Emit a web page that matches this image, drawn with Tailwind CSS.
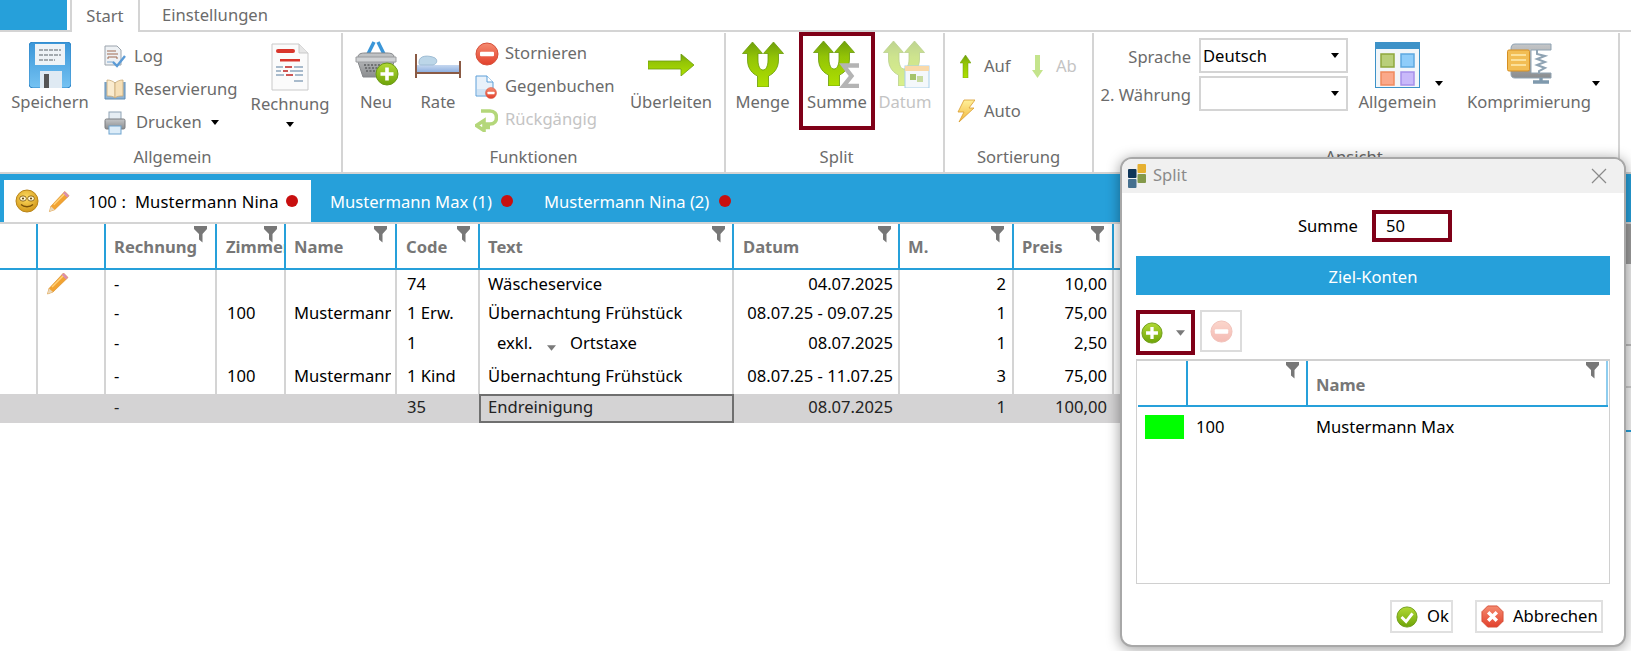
<!DOCTYPE html>
<html lang="de">
<head>
<meta charset="utf-8">
<title>Split</title>
<script src="https://cdn.jsdelivr.net/npm/@tailwindcss/browser@4"></script>
</head>
<body class="[font-family:'Noto_Sans',sans-serif] text-[16.6px] bg-white overflow-hidden">
<svg width="0" height="0" class="absolute">
  <defs>
    <linearGradient id="gFork" x1="0" y1="0" x2="0" y2="1"><stop offset="0" stop-color="#6f9f0c"/><stop offset=".35" stop-color="#93c406"/><stop offset="1" stop-color="#aee000"/></linearGradient>
    <linearGradient id="gBlue" x1="0" y1="0" x2="0" y2="1"><stop offset="0" stop-color="#3b96d8"/><stop offset="1" stop-color="#74c2f2"/></linearGradient>
    <linearGradient id="gRed" x1="0" y1="0" x2="0" y2="1"><stop offset="0" stop-color="#f58b70"/><stop offset="1" stop-color="#e2402c"/></linearGradient>
    <linearGradient id="gGreen" x1="0" y1="0" x2="0" y2="1"><stop offset="0" stop-color="#b2d935"/><stop offset="1" stop-color="#6ea408"/></linearGradient>
    <linearGradient id="gGray" x1="0" y1="0" x2="0" y2="1"><stop offset="0" stop-color="#c4c6c8"/><stop offset="1" stop-color="#8b8d8f"/></linearGradient>
    <linearGradient id="gBed" x1="0" y1="0" x2="0" y2="1"><stop offset="0" stop-color="#c6d8f0"/><stop offset="1" stop-color="#8fb0e0"/></linearGradient>
    <linearGradient id="gYellow" x1="0" y1="0" x2="0" y2="1"><stop offset="0" stop-color="#fff09a"/><stop offset="1" stop-color="#f2b63a"/></linearGradient>
    <radialGradient id="gFace" cx=".45" cy=".35" r=".7"><stop offset="0" stop-color="#ffdc60"/><stop offset="1" stop-color="#cf9314"/></radialGradient>
    <symbol id="funnel" viewBox="0 0 13 17"><path d="M0 0H13V3L8.5 8V16.5L5 13.5V8L0 3Z" fill="#777"/></symbol>
    <symbol id="fork" viewBox="0 0 42 45"><path d="M10.5 0L20.5 11.5H16V18C16 24 18 28 21 28C24 28 26 24 26 18V11.5H21.5L31.5 0L41.5 11.5H36.5V18C36.5 27 31 32 26.5 34V45H15.5V34C11 32 5.5 27 5.5 18V11.5H.5Z" fill="url(#gFork)" stroke="#689a08" stroke-width=".8"/></symbol>
    <symbol id="plus" viewBox="0 0 24 24"><circle cx="12" cy="12" r="11" fill="url(#gGreen)" stroke="#6b9a14"/><path d="M12 5.5V18.5M5.5 12H18.5" stroke="#fff" stroke-width="3.6"/></symbol>
    <symbol id="minus" viewBox="0 0 24 24"><circle cx="12" cy="12" r="11" fill="url(#gRed)" stroke="#d6503a"/><rect x="5" y="9.7" width="14" height="4.6" rx="1" fill="#fff"/></symbol>
    <symbol id="pencil" viewBox="0 0 24 24"><path d="M17.5 2L22 6.5 7 21 1.5 23 3 17.5Z" fill="#f2a332" stroke="#d68a20" stroke-width=".6"/><path d="M3 17.5L7 21 1.5 23Z" fill="#e9d6b8"/><path d="M15.5 4L17.5 2 22 6.5 20 8.5Z" fill="#d98fb0"/><path d="M6 16L17 5" stroke="#ffd27a" stroke-width="1.5"/></symbol>
    <symbol id="caret" viewBox="0 0 10 6"><path d="M0 0H10L5 6Z" fill="#000"/></symbol>
    <symbol id="caretg" viewBox="0 0 10 6"><path d="M0 0H10L5 6Z" fill="#7a7a7a"/></symbol>
  </defs>
</svg>

<div class="relative w-[1631px] h-[651px] overflow-hidden">
  <!-- top tabs -->
  <div class="flex h-[32px] text-[#6b6b6b]">
    <div class="w-[67px] bg-[#26a0da] border-b-2 border-[#d4d4d4]"></div>
    <div class="w-[3px] border-b-2 border-[#d4d4d4]"></div>
    <div class="w-[70px] border-x-2 border-[#d4d4d4] flex items-center justify-center">Start</div>
    <div class="flex-1 border-b-2 border-[#d4d4d4] pl-[22px] flex items-center">Einstellungen</div>
  </div>

  <!-- ribbon -->
  <div class="flex h-[142px] border-b-2 border-[#d4d4d4] text-[#6b6b6b]">
    <!-- Allgemein -->
    <div class="w-[343px] border-r-2 border-[#d4d4d4] mt-[1px] flex flex-col">
      <div class="flex-1 flex">
        <div class="w-[100px] flex flex-col items-center pt-[3px]">
          <div class="h-[53px] flex items-center justify-center pt-[4px]">
            <svg width="42" height="46" viewBox="0 0 42 46"><rect width="42" height="46" rx="4" fill="url(#gBlue)" stroke="#2f86c8"/><rect x="6" y="2" width="30" height="21" fill="#eef3f7"/><path d="M10 8H32M10 13H32M10 18H26" stroke="#8a9298" stroke-width="1.6" stroke-dasharray="4 1"/><rect x="11" y="29" width="22" height="17" fill="#dfeaf3"/><rect x="15" y="32" width="5" height="14" fill="#555"/></svg>
          </div>
          <div class="h-[24px] leading-[26px]">Speichern</div>
        </div>
        <div class="w-[146px] ml-[4px] pt-[7px]">
          <div class="h-[33px] flex items-center gap-[8px]">
            <svg width="22" height="23" viewBox="0 0 22 23"><path d="M1 1H13L17 5V20H1Z" fill="#eef1f4" stroke="#9aa3ac"/><path d="M3 6H12M3 9H14M4 14V12H13V14" stroke="#a06a50" fill="none"/><path d="M3 17H10" stroke="#7da7cf"/><path d="M9 17L13 21 21 11" stroke="#5b9bd6" stroke-width="2.4" fill="none"/></svg>
            <span>Log</span>
          </div>
          <div class="h-[33px] flex items-center gap-[8px]">
            <svg width="22" height="23" viewBox="0 0 22 23"><path d="M1 4V21H21V4" fill="#8fb3d3" stroke="#5f8db5"/><path d="M3 2C6 2 9 3 11 5V20C9 18 6 18 3 18Z" fill="#faecd0" stroke="#c9a976" stroke-width=".8"/><path d="M19 2C16 2 13 3 11 5V20C13 18 16 18 19 18Z" fill="#f6e0b8" stroke="#c9a976" stroke-width=".8"/></svg>
            <span>Reservierung</span>
          </div>
          <div class="h-[33px] flex items-center">
            <svg width="22" height="24" viewBox="0 0 22 24"><rect x="5" y="1" width="12" height="8" fill="#e6edf3" stroke="#8fa3b5"/><rect x="1" y="8" width="20" height="10" rx="1.5" fill="url(#gGray)" stroke="#7b7d80"/><rect x="5" y="15" width="12" height="8" fill="#dcecf8" stroke="#6ea4cf"/></svg>
            <span class="ml-[10px] w-[71px]">Drucken</span>
            <svg width="8" height="5" class="ml-[4px]"><use href="#caret"/></svg>
          </div>
        </div>
        <div class="w-[80px] flex flex-col items-center pt-[7px]">
          <div class="h-[54px] flex items-center justify-center">
            <svg width="40" height="48" viewBox="0 0 40 48"><path d="M2 1H29L38 10V47H2Z" fill="#fbfbfb" stroke="#c9c9c9"/><path d="M29 1V10H38" fill="#e6e6e6" stroke="#c9c9c9"/><rect x="6" y="6" width="19" height="4" rx="2" fill="#d9362c"/><rect x="10" y="16" width="20" height="2.5" fill="#d9362c"/><path d="M6 24H13M15 24H22M24 24H33M6 28H11M13 28H18M20 28H33M6 32H14M16 32H23M25 32H33M24 38H33" stroke="#8fa6bd" stroke-width="1.6"/><path d="M15 24H22M13 28H18M16 32H23" stroke="#d9362c" stroke-width="1.6"/></svg>
          </div>
          <div class="h-[24px] leading-[24px] -mt-[2px]">Rechnung</div>
          <svg width="8" height="5" class="mt-[6px]"><use href="#caret"/></svg>
        </div>
      </div>
      <div class="h-[28px] leading-[28px] text-center pl-[4px] mb-[1px]">Allgemein</div>
    </div>
    <!-- Funktionen -->
    <div class="w-[383px] border-r-2 border-[#d4d4d4] mt-[1px] flex flex-col">
      <div class="flex-1 flex">
        <div class="w-[66px] flex flex-col items-center pt-[3px]">
          <div class="h-[53px] flex items-center justify-center pt-[1px]">
            <svg width="46" height="46" viewBox="0 0 46 46"><path d="M14 16L21 2M32 16L25 2" stroke="#3b96d8" stroke-width="3.5" fill="none"/><path d="M5 17C5 14 8 13 12 13H34C38 13 41 14 41 17V22L36 37H10L5 22Z" fill="url(#gGray)" stroke="#85878a"/><path d="M3 17H43V22H3Z" fill="#cfd1d3" stroke="#9a9c9f"/><path d="M11 25H33M12 28H33M13 31H32" stroke="#6f7173" stroke-width="2" stroke-dasharray="2 1.5"/><use href="#plus" x="22" y="22" width="24" height="24"/></svg>
          </div>
          <div class="h-[24px] leading-[26px]">Neu</div>
        </div>
        <div class="w-[58px] flex flex-col items-center pt-[3px]">
          <div class="h-[53px] flex items-center justify-center pt-[5px]">
            <svg width="46" height="26" viewBox="0 0 46 26"><path d="M1 2V26M45 9V26" stroke="#8a5a44" stroke-width="2"/><path d="M2 13H44V20H2Z" fill="url(#gBed)"/><path d="M4 10C4 3 14 3 20 6C23 8 22 12 18 13H6C4 13 4 12 4 10Z" fill="#bcd6e8" stroke="#9fbdd4"/><path d="M2 21H44" stroke="#8a5a44" stroke-width="2.2"/></svg>
          </div>
          <div class="h-[24px] leading-[26px]">Rate</div>
        </div>
        <div class="w-[150px] ml-[8px] pt-[4px]">
          <div class="h-[33px] flex items-center gap-[6px]">
            <svg width="24" height="24"><use href="#minus"/></svg>
            <span>Stornieren</span>
          </div>
          <div class="h-[33px] flex items-center gap-[8px]">
            <svg width="22" height="24" viewBox="0 0 22 24"><path d="M1 1H12L18 7V21H1Z" fill="#e8f1fa" stroke="#5d9fd8"/><path d="M12 1V7H18" fill="#fff" stroke="#5d9fd8"/><path d="M2 14H17V20H2Z" fill="#cfe3f5"/><use href="#minus" x="10" y="12" width="12" height="12"/></svg>
            <span>Gegenbuchen</span>
          </div>
          <div class="h-[33px] flex items-center gap-[7px] text-[#c4c4c4]">
            <svg width="23" height="24" viewBox="0 0 23 24"><path d="M6 3H15C19.5 3 21.5 6 21.5 9.5C21.5 13 19.5 16 15 16H9V12.5L1.5 17.5 9 22.5V19.5H15" fill="none" stroke="#b4d77a" stroke-width="3.6"/></svg>
            <span>Rückgängig</span>
          </div>
        </div>
        <div class="w-[92px] flex flex-col items-center pt-[3px]">
          <div class="h-[53px] flex items-center justify-center pt-[4px]">
            <svg width="46" height="22" viewBox="0 0 46 22"><path d="M0 7H33V0L46 11 33 22V15H0Z" fill="url(#gFork)" stroke="#6d9d0c" stroke-width=".8"/></svg>
          </div>
          <div class="h-[24px] leading-[26px] whitespace-nowrap">Überleiten</div>
        </div>
      </div>
      <div class="h-[28px] leading-[28px] text-center mb-[1px]">Funktionen</div>
    </div>
    <!-- Split -->
    <div class="w-[219px] border-r-2 border-[#d4d4d4] mt-[1px] flex flex-col">
      <div class="flex-1 flex items-start">
        <div class="w-[73px] flex flex-col items-center pt-[3px]">
          <div class="h-[53px] flex items-center justify-center pt-[3px]"><svg width="42" height="45"><use href="#fork"/></svg></div>
          <div class="h-[24px] leading-[26px]">Menge</div>
        </div>
        <div class="w-[76px] h-[98px] -mt-[1px] border-4 border-[#7f0018] flex flex-col items-center">
          <div class="h-[53px] flex items-center justify-center pt-[2px]">
            <svg width="48" height="48" viewBox="0 0 48 48"><use href="#fork" y="1" width="42" height="45"/><path d="M46 25.5H30.5L38.5 36 30.5 46H46" fill="none" stroke="#b4b4b4" stroke-width="4.4"/></svg>
          </div>
          <div class="h-[24px] leading-[26px]">Summe</div>
        </div>
        <div class="w-[60px] flex flex-col items-center pt-[3px] text-[#c4c4c4]">
          <div class="h-[53px] flex items-center justify-center pl-[4px] pt-[2px]">
            <svg width="48" height="48" viewBox="0 0 48 48"><use href="#fork" y="1" width="42" height="45" opacity=".45"/><rect x="22" y="26" width="24" height="22" fill="#f4f8fb" stroke="#a8d0ea"/><rect x="22" y="26" width="24" height="5" fill="#f9d9a8"/><path d="M27 34H33V40H27Z" fill="#a5c46a"/><path d="M34 36H40V42H34Z" fill="#c8dca0"/></svg>
          </div>
          <div class="h-[24px] leading-[26px]">Datum</div>
        </div>
      </div>
      <div class="h-[28px] leading-[28px] text-center pl-[4px] mb-[1px]">Split</div>
    </div>
    <!-- Sortierung -->
    <div class="w-[149px] border-r-2 border-[#d4d4d4] mt-[1px] flex flex-col">
      <div class="flex-1 pt-[21px]">
        <div class="flex items-center h-[24px] pl-[15px]">
          <svg width="11" height="23" viewBox="0 0 11 23"><path d="M5.5 0L11 8H8V23H3V8H0Z" fill="url(#gFork)" stroke="#6d9d0c" stroke-width=".5"/></svg>
          <span class="ml-[13px] w-[30px]">Auf</span>
          <svg width="11" height="23" viewBox="0 0 11 23" class="ml-[18px]"><path d="M5.5 23L11 15H8V0H3V15H0Z" fill="#c4e48c"/></svg>
          <span class="ml-[13px] text-[#c4c4c4]">Ab</span>
        </div>
        <div class="flex items-center h-[24px] mt-[21px] pl-[12px]">
          <svg width="18" height="24" viewBox="0 0 18 24"><path d="M7 1H18L12 9H17L2 23 7 13H1Z" fill="url(#gYellow)" stroke="#d89c30" stroke-width=".8"/></svg>
          <span class="ml-[9px]">Auto</span>
        </div>
      </div>
      <div class="h-[28px] leading-[28px] text-center mb-[1px]">Sortierung</div>
    </div>
    <!-- Ansicht -->
    <div class="w-[526px] border-r-2 border-[#d4d4d4] mt-[1px] flex flex-col">
      <div class="flex-1 flex">
        <div class="w-[97px] pt-[5px] text-right">
          <div class="h-[38px] leading-[37px]">Sprache</div>
          <div class="h-[38px] leading-[38px] whitespace-nowrap">2. Währung</div>
        </div>
        <div class="w-[149px] ml-[8px] pt-[5px]">
          <div class="h-[35px] mb-[3px] border-2 border-[#d4d4d4] flex items-center justify-between pl-[2px] pr-[7px] text-black"><span class="pt-[2px]">Deutsch</span><svg width="8" height="5"><use href="#caret"/></svg></div>
          <div class="h-[35px] border-2 border-[#d4d4d4] flex items-center justify-end pr-[7px]"><svg width="8" height="5"><use href="#caret"/></svg></div>
        </div>
        <div class="w-[93px] ml-[3px] flex flex-col items-center pt-[3px] relative">
          <div class="h-[53px] flex items-center justify-center pt-[4px]">
            <svg width="45" height="46" viewBox="0 0 45 46"><rect x=".5" y=".5" width="44" height="45" fill="#f2f6f9" stroke="#3d92c8"/><rect x="1" y="1" width="43" height="6" fill="#3d92c8"/><rect x="6" y="12" width="13" height="13" fill="#b9cf7a" stroke="#8ea83c" stroke-width="1.5"/><rect x="26" y="12" width="13" height="13" fill="#8fcdfa" stroke="#5da8e0" stroke-width="1.5"/><rect x="6" y="30" width="13" height="13" fill="#fba98a" stroke="#ef8a5e" stroke-width="1.5"/><rect x="26" y="30" width="13" height="13" fill="#c9b9fa" stroke="#a690ea" stroke-width="1.5"/></svg>
          </div>
          <div class="h-[24px] leading-[26px]">Allgemein</div>
          <svg width="8" height="5" class="absolute left-[84px] top-[48px]"><use href="#caret"/></svg>
        </div>
        <div class="w-[128px] ml-[21px] flex flex-col items-center pt-[3px] relative">
          <div class="h-[53px] flex items-center justify-center pl-[1px] pt-[1px]">
            <svg width="46" height="44" viewBox="0 0 46 44"><path d="M8 3H44V9H24V32H44V37H8C4 37 4 34 4 32V8C4 5 5 3 8 3Z" fill="url(#gGray)" stroke="#8fa3b3"/><path d="M30 9V13L38 15 30 18 38 21 30 24 38 27 32 30V33" fill="none" stroke="#8fa3b3" stroke-width="2"/><path d="M34 37V40M26 41H42" stroke="#7f99ad" stroke-width="3.4"/><rect x=".5" y="9" width="22" height="21" rx="1.5" fill="#f2bd54" stroke="#d68f22"/><path d="M4 14H19M4 19H19M4 24H19" stroke="#fbe09a" stroke-width="2"/></svg>
          </div>
          <div class="h-[24px] leading-[26px] whitespace-nowrap">Komprimierung</div>
          <svg width="8" height="5" class="absolute left-[127px] top-[48px]"><use href="#caret"/></svg>
        </div>
      </div>
      <div class="h-[28px] leading-[28px] text-center pr-[4px] mb-[1px]">Ansicht</div>
    </div>
  </div>

  <!-- document tabs -->
  <div class="h-[50px] border-b-2 border-[#d4d4d4]">
    <div class="h-[48px] bg-[#26a0da] pt-[6px] pl-[4px] flex text-white">
      <div class="w-[307px] h-[42px] bg-white text-black flex items-center pl-[11px]">
        <svg width="24" height="24" viewBox="0 0 24 24"><circle cx="12" cy="12" r="11" fill="url(#gFace)" stroke="#b9851a"/><ellipse cx="8" cy="9.5" rx="3.4" ry="2.6" fill="#fff6d0" stroke="#7a5208" stroke-width=".8"/><ellipse cx="16" cy="9.5" rx="3.4" ry="2.6" fill="#fff6d0" stroke="#7a5208" stroke-width=".8"/><circle cx="8" cy="9.5" r="1" fill="#5a3a04"/><circle cx="16" cy="9.5" r="1" fill="#5a3a04"/><path d="M6 15.5C9 18.5 15 18.5 18 15.5" stroke="#7a5208" fill="none" stroke-width="1.3"/></svg>
        <svg width="23" height="24" class="ml-[9px]"><use href="#pencil"/></svg>
        <span class="ml-[17px] w-[190px] whitespace-pre pt-[2px] tracking-[0.15px]">100 :  Mustermann Nina</span>
        <span class="ml-[8px] w-[12px] h-[12px] rounded-full bg-[#c80f0f]"></span>
      </div>
      <div class="pl-[19px] flex items-center h-[42px]"><span class="w-[163px] whitespace-nowrap pt-[2px]">Mustermann Max (1)</span><span class="ml-[8px] w-[12px] h-[12px] rounded-full bg-[#c80f0f]"></span></div>
      <div class="pl-[31px] flex items-center h-[42px]"><span class="w-[167px] whitespace-nowrap pt-[2px]">Mustermann Nina (2)</span><span class="ml-[8px] w-[12px] h-[12px] rounded-full bg-[#c80f0f]"></span></div>
    </div>
  </div>

  <!-- table -->
  <div class="w-[1631px]">
    <div class="grid grid-cols-[38px_68px_111px_69px_111px_83px_254px_166px_114px_100px_1fr] h-[46px] border-b-2 border-[#26a0da] text-[#777] font-bold">
      <div class="border-r-2 border-[#26a0da]"></div>
      <div class="border-r-2 border-[#26a0da]"></div>
      <div class="relative border-r-2 border-[#26a0da] pl-[8px] pt-[11px] overflow-hidden whitespace-nowrap">Rechnung<svg width="13" height="17" class="absolute right-[8px] top-[2px]"><use href="#funnel"/></svg></div>
      <div class="relative border-r-2 border-[#26a0da] pl-[9px] pt-[11px] overflow-hidden whitespace-nowrap">Zimmer<svg width="13" height="17" class="absolute right-[7px] top-[2px]"><use href="#funnel"/></svg></div>
      <div class="relative border-r-2 border-[#26a0da] pl-[8px] pt-[11px]">Name<svg width="13" height="17" class="absolute right-[8px] top-[2px]"><use href="#funnel"/></svg></div>
      <div class="relative border-r-2 border-[#26a0da] pl-[9px] pt-[11px]">Code<svg width="13" height="17" class="absolute right-[8px] top-[2px]"><use href="#funnel"/></svg></div>
      <div class="relative border-r-2 border-[#26a0da] pl-[8px] pt-[11px]">Text<svg width="13" height="17" class="absolute right-[7px] top-[2px]"><use href="#funnel"/></svg></div>
      <div class="relative border-r-2 border-[#26a0da] pl-[9px] pt-[11px]">Datum<svg width="13" height="17" class="absolute right-[7px] top-[2px]"><use href="#funnel"/></svg></div>
      <div class="relative border-r-2 border-[#26a0da] pl-[8px] pt-[11px]">M.<svg width="13" height="17" class="absolute right-[8px] top-[2px]"><use href="#funnel"/></svg></div>
      <div class="relative border-r-2 border-[#26a0da] pl-[8px] pt-[11px]">Preis<svg width="13" height="17" class="absolute right-[8px] top-[2px]"><use href="#funnel"/></svg></div>
      <div></div>
    </div>

    <div class="grid grid-cols-[38px_68px_111px_69px_111px_83px_254px_166px_114px_100px_1fr] h-[29px] text-black leading-[27px]">
      <div class="border-r-2 border-[#d4d4d4]"></div>
      <div class="border-r-2 border-[#d4d4d4] pl-[8px] pt-[1px]"><svg width="24" height="24"><use href="#pencil"/></svg></div>
      <div class="border-r-2 border-[#d4d4d4] pl-[8px]">-</div>
      <div class="border-r-2 border-[#d4d4d4]"></div>
      <div class="border-r-2 border-[#d4d4d4]"></div>
      <div class="border-r-2 border-[#d4d4d4] pl-[10px]">74</div>
      <div class="border-r-2 border-[#d4d4d4] pl-[8px]">Wäscheservice</div>
      <div class="border-r-2 border-[#d4d4d4] pr-[5px] text-right">04.07.2025</div>
      <div class="border-r-2 border-[#d4d4d4] pr-[6px] text-right">2</div>
      <div class="border-r-2 border-[#d4d4d4] pr-[5px] text-right">10,00</div>
      <div></div>
    </div>
    <div class="grid grid-cols-[38px_68px_111px_69px_111px_83px_254px_166px_114px_100px_1fr] h-[30px] text-black leading-[28px]">
      <div class="border-r-2 border-[#d4d4d4]"></div>
      <div class="border-r-2 border-[#d4d4d4]"></div>
      <div class="border-r-2 border-[#d4d4d4] pl-[8px]">-</div>
      <div class="border-r-2 border-[#d4d4d4] pl-[10px]">100</div>
      <div class="border-r-2 border-[#d4d4d4] whitespace-nowrap"><div class="w-[97px] ml-[8px] overflow-hidden">Mustermann</div></div>
      <div class="border-r-2 border-[#d4d4d4] pl-[10px]">1 Erw.</div>
      <div class="border-r-2 border-[#d4d4d4] pl-[8px] whitespace-nowrap">Übernachtung Frühstück</div>
      <div class="border-r-2 border-[#d4d4d4] pr-[5px] text-right whitespace-nowrap">08.07.25 - 09.07.25</div>
      <div class="border-r-2 border-[#d4d4d4] pr-[6px] text-right">1</div>
      <div class="border-r-2 border-[#d4d4d4] pr-[5px] text-right">75,00</div>
      <div></div>
    </div>
    <div class="grid grid-cols-[38px_68px_111px_69px_111px_83px_254px_166px_114px_100px_1fr] h-[31px] text-black leading-[28px]">
      <div class="border-r-2 border-[#d4d4d4]"></div>
      <div class="border-r-2 border-[#d4d4d4]"></div>
      <div class="border-r-2 border-[#d4d4d4] pl-[8px]">-</div>
      <div class="border-r-2 border-[#d4d4d4]"></div>
      <div class="border-r-2 border-[#d4d4d4]"></div>
      <div class="border-r-2 border-[#d4d4d4] pl-[10px]">1</div>
      <div class="border-r-2 border-[#d4d4d4] pl-[17px] flex items-start"><span class="w-[50px]">exkl.</span><svg width="9" height="6" class="mt-[16px]"><use href="#caretg"/></svg><span class="ml-[14px]">Ortstaxe</span></div>
      <div class="border-r-2 border-[#d4d4d4] pr-[5px] text-right">08.07.2025</div>
      <div class="border-r-2 border-[#d4d4d4] pr-[6px] text-right">1</div>
      <div class="border-r-2 border-[#d4d4d4] pr-[5px] text-right">2,50</div>
      <div></div>
    </div>
    <div class="grid grid-cols-[38px_68px_111px_69px_111px_83px_254px_166px_114px_100px_1fr] h-[34px] text-black leading-[32px]">
      <div class="border-r-2 border-[#d4d4d4]"></div>
      <div class="border-r-2 border-[#d4d4d4]"></div>
      <div class="border-r-2 border-[#d4d4d4] pl-[8px]">-</div>
      <div class="border-r-2 border-[#d4d4d4] pl-[10px]">100</div>
      <div class="border-r-2 border-[#d4d4d4] whitespace-nowrap"><div class="w-[97px] ml-[8px] overflow-hidden">Mustermann</div></div>
      <div class="border-r-2 border-[#d4d4d4] pl-[10px]">1 Kind</div>
      <div class="border-r-2 border-[#d4d4d4] pl-[8px] whitespace-nowrap">Übernachtung Frühstück</div>
      <div class="border-r-2 border-[#d4d4d4] pr-[5px] text-right whitespace-nowrap">08.07.25 - 11.07.25</div>
      <div class="border-r-2 border-[#d4d4d4] pr-[6px] text-right">3</div>
      <div class="border-r-2 border-[#d4d4d4] pr-[5px] text-right">75,00</div>
      <div></div>
    </div>
    <div class="grid grid-cols-[38px_68px_111px_69px_111px_83px_254px_166px_114px_100px_1fr] h-[29px] bg-[#d4d3d4] text-[#222] leading-[25px]">
      <div></div>
      <div></div>
      <div class="pl-[8px]">-</div>
      <div></div>
      <div></div>
      <div class="pl-[10px]">35</div>
      <div class="border-2 border-[#6f6f6f] -ml-[1px] pl-[7px] leading-[21px]">Endreinigung</div>
      <div class="pr-[7px] text-right">08.07.2025</div>
      <div class="pr-[8px] text-right">1</div>
      <div class="pr-[7px] text-right">100,00</div>
      <div></div>
    </div>
  </div>

  <!-- page scrollbar beside the dialog -->
  <div class="absolute left-[1625px] top-[222px] w-[6px] h-[210px] flex flex-col">
    <div class="h-[2px] bg-[#d4d4d4]"></div>
    <div class="h-[40px] bg-[#9c9c9c]"></div>
    <div class="h-[80px] bg-[#ececec]"></div>
    <div class="h-[2px] bg-[#bbbbbb]"></div>
    <div class="h-[40px] bg-[#f2f2f2]"></div>
    <div class="h-[2px] bg-[#cccccc]"></div>
    <div class="h-[42px] bg-[#f4f4f4]"></div>
    <div class="h-[2px] bg-[#26a0da]"></div>
  </div>

  <!-- dialog -->
  <div class="absolute left-[1120px] top-[157px] w-[506px] h-[490px] bg-white border-2 border-[#a8a8a8] rounded-[12px] shadow-[0_2px_14px_rgba(0,0,0,0.4)] overflow-hidden flex flex-col text-black">
    <div class="h-[34px] bg-[#f0f0f0] flex items-center pl-[6px] pr-[17px] text-[#8a8a8a]">
      <svg width="18" height="24" viewBox="0 0 18 24"><rect x="0" y="5" width="8.5" height="9" rx="1" fill="#0f3558"/><rect x="0" y="15" width="8.5" height="9" rx="1" fill="#46708f"/><rect x="9.5" y="0" width="8.5" height="9" rx="1" fill="#e6b030"/><rect x="9.5" y="10" width="8.5" height="9" rx="1" fill="#84994a"/></svg>
      <span class="ml-[7px] pb-[2px]">Split</span>
      <svg width="16" height="16" viewBox="0 0 16 16" class="ml-auto"><path d="M1 1L15 15M15 1L1 15" stroke="#8a8a8a" stroke-width="1.2"/></svg>
    </div>
    <div class="flex items-center h-[32px] mt-[17px] pl-[176px]">
      <span class="w-[74px]">Summe</span>
      <div class="w-[80px] h-[32px] border-4 border-[#7f0018] pl-[10px] flex items-center">50</div>
    </div>
    <div class="mx-[14px] mt-[14px] h-[39px] bg-[#26a0da] text-white flex items-center justify-center pt-[3px]">Ziel-Konten</div>
    <div class="flex mx-[14px] mt-[15px] gap-[5px] items-start">
      <div class="w-[59px] h-[45px] border-4 border-[#7f0018] flex items-center pl-[1px]">
        <svg width="22" height="22"><use href="#plus"/></svg>
        <svg width="9" height="6" class="ml-[13px]"><use href="#caretg"/></svg>
      </div>
      <div class="w-[42px] h-[42px] border-2 border-[#dcdcdc] flex items-center justify-center">
        <svg width="23" height="23" class="opacity-35"><use href="#minus"/></svg>
      </div>
    </div>
    <div class="mx-[14px] mt-[4px] h-[225px] border border-[#d0d0d0] border-t-2 flex flex-col">
      <div class="grid grid-cols-[50px_120px_1fr] h-[46px] border-b-2 mx-[1px] border-[#26a0da] text-[#777] font-bold">
        <div class="border-r-2 border-[#26a0da]"></div>
        <div class="relative border-r-2 border-[#26a0da]"><svg width="13" height="17" class="absolute right-[7px] top-[1px]"><use href="#funnel"/></svg></div>
        <div class="relative border-r-2 border-[#8fcdee] pl-[8px] pt-[12px]">Name<svg width="13" height="17" class="absolute right-[7px] top-[1px]"><use href="#funnel"/></svg></div>
      </div>
      <div class="grid grid-cols-[51px_120px_1fr] mt-[8px] h-[24px] items-center">
        <div class="pl-[8px]"><div class="w-[39px] h-[24px] bg-[#00ff00]"></div></div>
        <div class="pl-[8px]">100</div>
        <div class="pl-[8px]">Mustermann Max</div>
      </div>
    </div>
    <div class="flex justify-end gap-[22px] mt-[16px] pr-[21px]">
      <div class="w-[63px] h-[33px] border-2 border-[#e0e0e0] flex items-center pl-[4px]">
        <svg width="22" height="22" viewBox="0 0 24 24"><circle cx="12" cy="12" r="11" fill="url(#gGreen)" stroke="#6b9a14"/><path d="M6 12L11 17 18 8" stroke="#fff" stroke-width="3.2" fill="none"/></svg>
        <span class="ml-[9px]">Ok</span>
      </div>
      <div class="w-[128px] h-[33px] border-2 border-[#e0e0e0] flex items-center pl-[4px]">
        <svg width="23" height="23" viewBox="0 0 24 24"><path d="M7 1H17L23 7V17L17 23H7L1 17V7Z" fill="url(#gRed)" stroke="#d6503a"/><path d="M7.5 7.5L16.5 16.5M16.5 7.5L7.5 16.5" stroke="#fff" stroke-width="3.6"/></svg>
        <span class="ml-[9px] whitespace-nowrap">Abbrechen</span>
      </div>
    </div>
  </div>
</div>
</body>
</html>
